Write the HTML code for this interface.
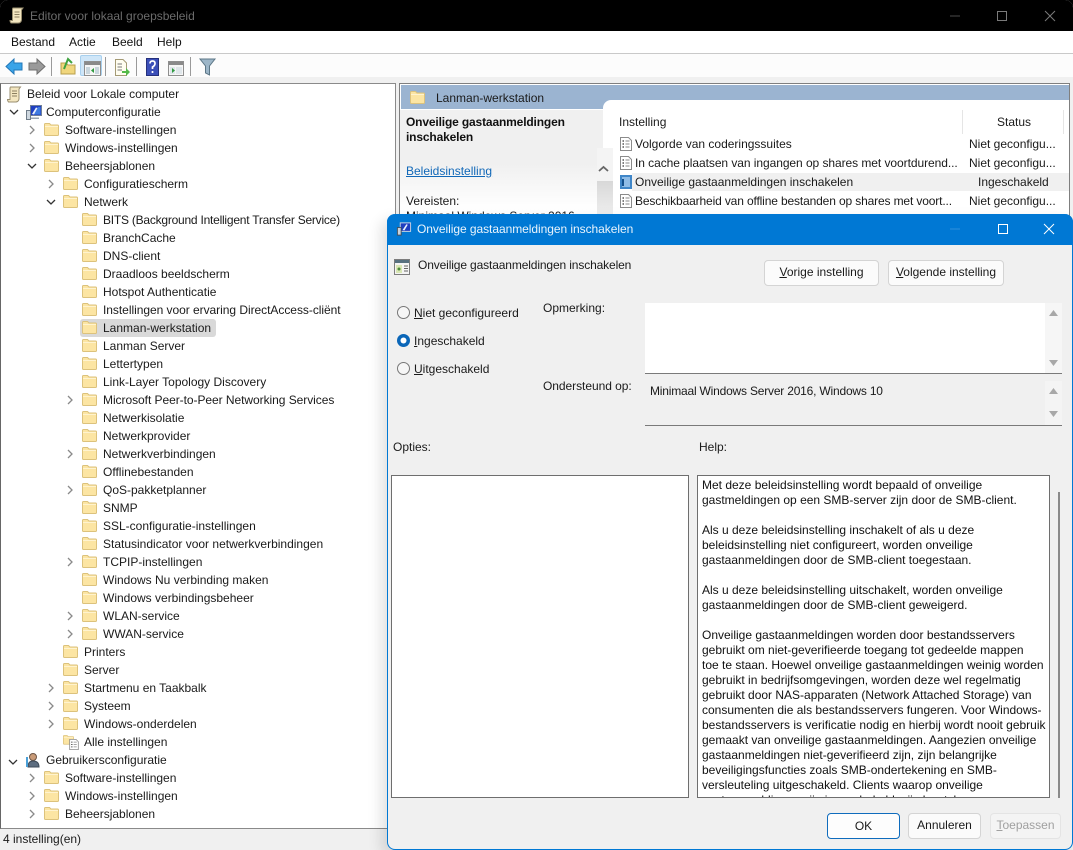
<!DOCTYPE html>
<html><head><meta charset="utf-8"><style>
html,body{margin:0;padding:0;background:#000;}
#p{position:relative;width:1073px;height:850px;overflow:hidden;background:#f0f0f0;font:12px/18px "Liberation Sans",sans-serif;color:#1a1a1a;border-radius:8px 8px 0 0}
#p div,#p span.a,#p svg.a{position:absolute}
.t{white-space:nowrap}
.h{left:702px;white-space:nowrap;height:15px;line-height:15px;color:#111}
u{text-decoration:underline}
.btn{background:#fbfbfb;border:1px solid #d4d4d4;border-radius:4px;text-align:center;box-sizing:border-box;line-height:23px;color:#1a1a1a}
</style></head><body><div id="p">
<svg width="0" height="0" style="position:absolute"><defs>
<symbol id="f" viewBox="0 0 15 14"><path d="M.5 2.500Q.5 1.500 1.500 1.500H5.500L7 3H13.500Q14.500 3 14.500 4V12.500Q14.500 13.500 13.500 13.500H1.500Q.5 13.500 .5 12.500Z" fill="#fce5a3" stroke="#dcc27c"/><path d="M1 4.500H14" stroke="#fff3cf" stroke-width="1"/></symbol>
<symbol id="l" viewBox="0 0 12 14"><path d="M.5.5H8.500L11.500 3.500V13.500H.5Z" fill="#fff" stroke="#8b8b8b"/><path d="M2.500 4H4M2.500 7H4M2.500 10H4" stroke="#333" stroke-width="1.200"/><path d="M5.500 4H9.500M5.500 7H9.500M5.500 10H9.500" stroke="#888"/></symbol>
</defs></svg>

<!-- title bar -->
<div style="left:0;top:0;width:1073px;height:31px;background:#000"></div>
<svg class="a" style="left:9px;top:7px" width="16" height="17" viewBox="0 0 16 17"><path d="M4 1H14L12.500 3V13Q12 16 9 16H2Q1 15 1 13.500H3.500V3Q3.500 1 4 1Z" fill="#f3e6c0" stroke="#9a8f70"/><path d="M5.500 5H10.500M5.500 7.500H10.500M5.500 10H10.500" stroke="#8b7f60"/></svg>
<div class="t" style="left:30px;top:7px;color:#6b6b6b">Editor voor lokaal groepsbeleid</div>
<svg class="a" style="left:950px;top:10px" width="110" height="12" viewBox="0 0 110 12"><path d="M0 6H10" stroke="#4a4a4a"/><path d="M47.500 1.500H56.500V10.500H47.500Z" fill="none" stroke="#7a7a7a"/><path d="M95 1L105 11M105 1L95 11" stroke="#7a7a7a"/></svg>

<!-- menu -->
<div style="left:0;top:31px;width:1073px;height:22px;background:#fff;border-bottom:1px solid #c9c9c9"></div>
<div class="t" style="left:11px;top:33px;color:#111">Bestand</div>
<div class="t" style="left:69px;top:33px;color:#111">Actie</div>
<div class="t" style="left:112px;top:33px;color:#111">Beeld</div>
<div class="t" style="left:157px;top:33px;color:#111">Help</div>

<!-- toolbar -->
<div style="left:0;top:54px;width:1073px;height:23px;background:#fcfcfc"></div>
<div style="left:80px;top:55px;width:22px;height:21px;background:#cfe6f8;border:1px solid #a8d0ee;border-radius:2px;box-sizing:border-box"></div>
<svg class="a" style="left:0;top:54px" width="225" height="26" viewBox="0 0 225 26">
<path d="M6 12.500L14 5V9H22V16H14V20Z" fill="#3aa4e8" stroke="#2277b8"/>
<path d="M45 12.500L37 5V9H29V16H37V20Z" fill="#9a9a9a" stroke="#6f6f6f"/>
<path d="M51.500 3V22M105.500 3V22M136.500 3V22M190.500 3V22" stroke="#9a9a9a"/>
<path d="M61 9H66L68 11H75V20H61Z" fill="#f0d67d" stroke="#b99f4d"/><path d="M64 15L68 5L72 9" fill="none" stroke="#3fa33f" stroke-width="2"/>
<path d="M84.500 7.500H100.500V21.500H84.500Z" fill="#f6f6f6" stroke="#8f8f8f"/><path d="M85 8H100V11H85Z" fill="#8a8a8a"/><path d="M86 13H90V20H86ZM95 13H99V20H95Z" fill="#c9d6dd"/><path d="M94 14V19L91 16.500Z" fill="#2f9a3f"/>
<path d="M115.500 5.500H123L126.500 9V21.500H115.500Z" fill="#fffdf0" stroke="#a49a75"/><path d="M117.500 10H122M117.500 13H122M117.500 16H122" stroke="#777"/><path d="M122 17H126V14L130 18L126 22V19H122Z" fill="#54b948"/>
<path d="M146.500 4.500H158.500V21.500H146.500Z" fill="#3b4fb8" stroke="#25307c"/><path d="M150 9.500Q150 7 152.500 7Q155 7 155 9.500Q155 11.500 152.500 13V15M152.500 17V19" fill="none" stroke="#fff" stroke-width="1.700"/>
<path d="M168.500 7.500H183.500V21.500H168.500Z" fill="#f6f6f6" stroke="#8f8f8f"/><path d="M169 8H183V11H169Z" fill="#8a8a8a"/><path d="M176 13H182V20H176ZM170 13H175V20H170Z" fill="#dfe6ea"/><path d="M172 14V19L175 16.500Z" fill="#2f9a3f"/>
<path d="M200 5H215L209.500 12V21L205.500 19V12Z" fill="#9db6c8" stroke="#5c7686"/>
</svg>

<!-- tree panel -->
<div style="left:0;top:83px;width:396px;height:746px;background:#fff;border:1px solid #8a8a8a;border-left:1px solid #666;box-sizing:border-box"></div>

<svg class="a" style="left:6px;top:86px" width="17" height="17" viewBox="0 0 16 17"><path d="M4 1H14L12.500 3V13Q12 16 9 16H2Q1 15 1 13.500H3.500V3Q3.500 1 4 1Z" fill="#f3e6c0" stroke="#9a8f70"/><path d="M5.500 5H10.500M5.500 7.500H10.500M5.500 10H10.500" stroke="#8b7f60"/></svg>
<div class="t" style="left:27px;top:85px">Beleid voor Lokale computer</div>

<svg class="a" style="left:9px;top:108px" width="10" height="8" viewBox="0 0 10 8"><path d="M1 2L5 6L9 2" fill="none" stroke="#333" stroke-width="1.300"/></svg>
<svg class="a" style="left:25px;top:105px" width="17" height="15" viewBox="0 0 17 15"><path d="M5.500.5H16.500V10.500H5.500Z" fill="#1f3fc0" stroke="#6f7f99"/><path d="M9 9.500L13 2H15.500V9.500Z" fill="#3f7be0"/><path d="M7 9L11 2.500L12.500 3L9 9.500Z" fill="#eaf2ff"/><path d="M1.500 5.500H5.500V14.500H1.500Z" fill="#cfd8e0" stroke="#6f7c88"/><path d="M6 12.500H14V14H6Z" fill="#9aa6b2"/></svg>
<div class="t" style="left:46px;top:103px">Computerconfiguratie</div>

<div style="left:80px;top:319px;width:136px;height:18px;background:#d9d9d9;border-radius:3px"></div>

<!-- tree rows: chevrons -->
<svg class="a" style="left:0;top:0" width="396" height="830">
<g fill="none" stroke="#8a8a8a" stroke-width="1.300">
<path d="M30 126l4 4l-4 4M30 144l4 4l-4 4M49 180l4 4l-4 4M68 396l4 4l-4 4M68 450l4 4l-4 4M68 486l4 4l-4 4M68 558l4 4l-4 4M68 612l4 4l-4 4M68 630l4 4l-4 4M49 684l4 4l-4 4M49 702l4 4l-4 4M49 720l4 4l-4 4M30 774l4 4l-4 4M30 792l4 4l-4 4M30 810l4 4l-4 4"/>
</g>
<g fill="none" stroke="#333" stroke-width="1.300">
<path d="M28 164l4 4l4-4M47 200l4 4l4-4"/>
</g>
<!-- folders -->
<g>
<use href="#f" x="44" y="122" width="15" height="14"/><use href="#f" x="44" y="140" width="15" height="14"/><use href="#f" x="44" y="158" width="15" height="14"/>
<use href="#f" x="63" y="176" width="15" height="14"/><use href="#f" x="63" y="194" width="15" height="14"/>
<use href="#f" x="82" y="212" width="15" height="14"/><use href="#f" x="82" y="230" width="15" height="14"/><use href="#f" x="82" y="248" width="15" height="14"/><use href="#f" x="82" y="266" width="15" height="14"/><use href="#f" x="82" y="284" width="15" height="14"/><use href="#f" x="82" y="302" width="15" height="14"/><use href="#f" x="82" y="320" width="15" height="14"/><use href="#f" x="82" y="338" width="15" height="14"/><use href="#f" x="82" y="356" width="15" height="14"/><use href="#f" x="82" y="374" width="15" height="14"/><use href="#f" x="82" y="392" width="15" height="14"/><use href="#f" x="82" y="410" width="15" height="14"/><use href="#f" x="82" y="428" width="15" height="14"/><use href="#f" x="82" y="446" width="15" height="14"/><use href="#f" x="82" y="464" width="15" height="14"/><use href="#f" x="82" y="482" width="15" height="14"/><use href="#f" x="82" y="500" width="15" height="14"/><use href="#f" x="82" y="518" width="15" height="14"/><use href="#f" x="82" y="536" width="15" height="14"/><use href="#f" x="82" y="554" width="15" height="14"/><use href="#f" x="82" y="572" width="15" height="14"/><use href="#f" x="82" y="590" width="15" height="14"/><use href="#f" x="82" y="608" width="15" height="14"/><use href="#f" x="82" y="626" width="15" height="14"/>
<use href="#f" x="63" y="644" width="15" height="14"/><use href="#f" x="63" y="662" width="15" height="14"/><use href="#f" x="63" y="680" width="15" height="14"/><use href="#f" x="63" y="698" width="15" height="14"/><use href="#f" x="63" y="716" width="15" height="14"/>
<use href="#f" x="44" y="770" width="15" height="14"/><use href="#f" x="44" y="788" width="15" height="14"/><use href="#f" x="44" y="806" width="15" height="14"/>
</g>
<!-- alle instellingen -->
<use href="#f" x="63" y="734" width="11" height="11"/><use href="#l" x="69" y="739" width="10" height="11"/>
<!-- user -->
<path d="M9 776l4 4l4-4" transform="translate(0 -16)" fill="none" stroke="#333" stroke-width="1.300"/>
<circle cx="33" cy="757" r="3.500" fill="#c99b78" stroke="#6d5546"/><path d="M28 767Q28 761 33 761Q39 761 39 767Z" fill="#5d6d80" stroke="#3d4a58"/><path d="M27 757V767" stroke="#4aa0d8" stroke-width="2"/>
</svg>

<div class="t" style="left:65px;top:121px">Software-instellingen</div>
<div class="t" style="left:65px;top:139px">Windows-instellingen</div>
<div class="t" style="left:65px;top:157px">Beheersjablonen</div>
<div class="t" style="left:84px;top:175px">Configuratiescherm</div>
<div class="t" style="left:84px;top:193px">Netwerk</div>
<div class="t" style="left:103px;top:211px;letter-spacing:-.23px">BITS (Background Intelligent Transfer Service)</div>
<div class="t" style="left:103px;top:229px">BranchCache</div>
<div class="t" style="left:103px;top:247px">DNS-client</div>
<div class="t" style="left:103px;top:265px">Draadloos beeldscherm</div>
<div class="t" style="left:103px;top:283px">Hotspot Authenticatie</div>
<div class="t" style="left:103px;top:301px;letter-spacing:-.04px">Instellingen voor ervaring DirectAccess-cliënt</div>
<div class="t" style="left:103px;top:319px">Lanman-werkstation</div>
<div class="t" style="left:103px;top:337px">Lanman Server</div>
<div class="t" style="left:103px;top:355px">Lettertypen</div>
<div class="t" style="left:103px;top:373px">Link-Layer Topology Discovery</div>
<div class="t" style="left:103px;top:391px;letter-spacing:-.05px">Microsoft Peer-to-Peer Networking Services</div>
<div class="t" style="left:103px;top:409px">Netwerkisolatie</div>
<div class="t" style="left:103px;top:427px">Netwerkprovider</div>
<div class="t" style="left:103px;top:445px">Netwerkverbindingen</div>
<div class="t" style="left:103px;top:463px">Offlinebestanden</div>
<div class="t" style="left:103px;top:481px">QoS-pakketplanner</div>
<div class="t" style="left:103px;top:499px">SNMP</div>
<div class="t" style="left:103px;top:517px">SSL-configuratie-instellingen</div>
<div class="t" style="left:103px;top:535px">Statusindicator voor netwerkverbindingen</div>
<div class="t" style="left:103px;top:553px">TCPIP-instellingen</div>
<div class="t" style="left:103px;top:571px">Windows Nu verbinding maken</div>
<div class="t" style="left:103px;top:589px">Windows verbindingsbeheer</div>
<div class="t" style="left:103px;top:607px">WLAN-service</div>
<div class="t" style="left:103px;top:625px">WWAN-service</div>
<div class="t" style="left:84px;top:643px">Printers</div>
<div class="t" style="left:84px;top:661px">Server</div>
<div class="t" style="left:84px;top:679px">Startmenu en Taakbalk</div>
<div class="t" style="left:84px;top:697px">Systeem</div>
<div class="t" style="left:84px;top:715px">Windows-onderdelen</div>
<div class="t" style="left:84px;top:733px">Alle instellingen</div>
<div class="t" style="left:46px;top:751px">Gebruikersconfiguratie</div>
<div class="t" style="left:65px;top:769px">Software-instellingen</div>
<div class="t" style="left:65px;top:787px">Windows-instellingen</div>
<div class="t" style="left:65px;top:805px">Beheersjablonen</div>

<!-- status bar -->
<div style="left:0;top:829px;width:388px;height:21px;background:#f0f0f0"></div>
<div class="t" style="left:3px;top:830px">4 instelling(en)</div>

<!-- right panel -->
<div style="left:399px;top:83px;width:671px;height:135px;background:#fff;border:1px solid #7f7f7f;box-sizing:border-box"></div>
<div style="left:401px;top:85px;width:668px;height:24px;background:#9bb4d1"></div>
<div style="left:400px;top:110px;width:203px;height:108px;background:linear-gradient(#f0f0f0,#f0f0f0 50%,#fff 92%)"></div>
<div style="left:603px;top:100px;width:466px;height:118px;background:#fff;border-radius:8px 0 0 0"></div>
<svg class="a" style="left:410px;top:90px" width="15" height="14"><use href="#f"/></svg>
<div class="t" style="left:436px;top:89px;color:#1a1a1a">Lanman-werkstation</div>
<div class="t" style="left:406px;top:115px;font-weight:bold;color:#111;line-height:15px;letter-spacing:-.15px">Onveilige gastaanmeldingen<br>inschakelen</div>
<div class="t" style="left:406px;top:162px;color:#1168b8"><u>Beleidsinstelling</u></div>
<div class="t" style="left:406px;top:192px">Vereisten:</div>
<div class="t" style="left:406px;top:207px">Minimaal Windows Server 2016,</div>
<div style="left:597px;top:148px;width:16px;height:70px;background:linear-gradient(#f4f4f4,#f4f4f4 33px,#d8d8d8 33px,#f0f0f0)"></div>
<svg class="a" style="left:598px;top:165px" width="11" height="8"><path d="M1 6L5.500 2L10 6" fill="none" stroke="#666" stroke-width="1.800"/></svg>

<div class="t" style="left:619px;top:113px">Instelling</div>
<div style="left:962px;top:110px;width:1px;height:24px;background:#e5e5e5"></div>
<div style="left:1063px;top:110px;width:1px;height:24px;background:#e5e5e5"></div>
<div class="t" style="left:997px;top:113px">Status</div>
<div style="left:632px;top:173px;width:437px;height:18px;background:#f0f0f0"></div>
<svg class="a" style="left:620px;top:137px" width="12" height="14"><use href="#l"/></svg>
<svg class="a" style="left:620px;top:156px" width="12" height="14"><use href="#l"/></svg>
<svg class="a" style="left:620px;top:175px" width="12" height="14" viewBox="0 0 12 14"><path d="M0 0H12V14H0Z" fill="#3f86c8"/><path d="M2 2H10V12H2Z" fill="#8fbce6"/><path d="M3 4V11" stroke="#14508c" stroke-width="2"/></svg>
<svg class="a" style="left:620px;top:194px" width="12" height="14"><use href="#l"/></svg>
<div class="t" style="left:635px;top:135px">Volgorde van coderingssuites</div>
<div class="t" style="left:635px;top:154px;letter-spacing:-.06px">In cache plaatsen van ingangen op shares met voortdurend...</div>
<div class="t" style="left:635px;top:173px">Onveilige gastaanmeldingen inschakelen</div>
<div class="t" style="left:635px;top:192px;letter-spacing:-.14px">Beschikbaarheid van offline bestanden op shares met voort...</div>
<div class="t" style="left:969px;top:135px">Niet geconfigu...</div>
<div class="t" style="left:969px;top:154px">Niet geconfigu...</div>
<div class="t" style="left:978px;top:173px">Ingeschakeld</div>
<div class="t" style="left:969px;top:192px">Niet geconfigu...</div>
<div style="left:1070px;top:83px;width:3px;height:135px;background:#f0f0f0"></div>

<!-- dialog -->
<div style="left:387px;top:214px;width:686px;height:636px;background:#f0f0f0;border:1px solid #0078d4;border-top:0;border-radius:8px;box-sizing:border-box;box-shadow:-6px 6px 14px rgba(0,0,0,.12)"></div>
<div style="left:387px;top:214px;width:686px;height:31px;background:#0078d4;border-radius:8px 8px 0 0"></div>
<svg class="a" style="left:396px;top:221px" width="16" height="16" viewBox="0 0 17 16"><path d="M4.500 1.500H15.500V10.500H4.500Z" fill="#1f3fc0" stroke="#c5d2e2"/><path d="M7 9L11 3L12.500 3.500L9 9.500Z" fill="#eaf2ff"/><path d="M1.500 6.500H5.500V14.500H1.500Z" fill="#c9d2dc" stroke="#42505c"/></svg>
<div class="t" style="left:417px;top:220px;color:#eaf4fc;letter-spacing:-.05px">Onveilige gastaanmeldingen inschakelen</div>
<svg class="a" style="left:950px;top:223px" width="110" height="12" viewBox="0 0 110 12"><path d="M0 6H10" stroke="#2f8fdc"/><path d="M48.500 1.500H57.500V10.500H48.500Z" fill="none" stroke="#fff"/><path d="M94 1L104 11M104 1L94 11" stroke="#fff"/></svg>

<svg class="a" style="left:394px;top:258px" width="16" height="17" viewBox="0 0 16 17"><path d="M.5 1.500H15.500V16.500H.5Z" fill="#f4f4f4" stroke="#7c7c7c"/><path d="M1 2H15V5H1Z" fill="#57707f"/><path d="M2 7H8V15H2Z" fill="#d9e6b4"/><path d="M10 8H14M10 10.500H14M10 13H14" stroke="#666"/><circle cx="5" cy="11" r="1.500" fill="#4a8a3a"/></svg>
<div class="t" style="left:418px;top:256px;letter-spacing:-.13px">Onveilige gastaanmeldingen inschakelen</div>
<div class="btn" style="left:764px;top:260px;width:115px;height:26px"><u>V</u>orige instelling</div>
<div class="btn" style="left:888px;top:260px;width:116px;height:26px"><u>V</u>olgende instelling</div>

<svg class="a" style="left:396px;top:305px" width="15" height="72" viewBox="0 0 15 72">
<circle cx="7.500" cy="7.500" r="6" fill="#f6f6f6" stroke="#777"/>
<circle cx="7.500" cy="35.500" r="6.500" fill="#0a66b8"/><circle cx="7.500" cy="35.500" r="3" fill="#fff"/>
<circle cx="7.500" cy="63.500" r="6" fill="#f6f6f6" stroke="#777"/>
</svg>
<div class="t" style="left:414px;top:304px"><u>N</u>iet geconfigureerd</div>
<div class="t" style="left:414px;top:332px"><u>I</u>ngeschakeld</div>
<div class="t" style="left:414px;top:360px"><u>U</u>itgeschakeld</div>
<div class="t" style="left:543px;top:299px">Opmerking:</div>
<div class="t" style="left:543px;top:377px;letter-spacing:-.05px">Ondersteund op:</div>

<div style="left:645px;top:303px;width:417px;height:71px;background:#fff;border-bottom:1px solid #7a7a7a;box-sizing:border-box"></div>
<div style="left:1045px;top:303px;width:17px;height:70px;background:#f6f6f6"></div>
<svg class="a" style="left:1048px;top:308px" width="11" height="62"><path d="M1 8L5.500 2L10 8Z" fill="#a8a8a8"/><path d="M1 52L5.500 58L10 52Z" fill="#a8a8a8"/></svg>
<div style="left:645px;top:381px;width:417px;height:45px;background:#f0f0f0;border-bottom:1px solid #7a7a7a;box-sizing:border-box"></div>
<div style="left:1045px;top:381px;width:17px;height:44px;background:#f4f4f4"></div>
<svg class="a" style="left:1048px;top:384px" width="11" height="40"><path d="M1 10L5.500 4L10 10Z" fill="#a8a8a8"/><path d="M1 27L5.500 33L10 27Z" fill="#a8a8a8"/></svg>
<div class="t" style="left:650px;top:382px;letter-spacing:-.2px">Minimaal Windows Server 2016, Windows 10</div>

<div class="t" style="left:393px;top:438px">Opties:</div>
<div class="t" style="left:699px;top:438px">Help:</div>

<div style="left:391px;top:475px;width:298px;height:323px;background:#fff;border:1px solid #6e6e6e;box-sizing:border-box"></div>
<div style="left:697px;top:475px;width:353px;height:323px;background:#fff;border:1px solid #6e6e6e;box-sizing:border-box"></div>
<div style="left:1058px;top:492px;width:2px;height:306px;background:#8a8a8a"></div>

<div style="left:698px;top:476px;width:351px;height:321px;overflow:hidden">
<div class="h" style="left:4px;top:2px">Met deze beleidsinstelling wordt bepaald of onveilige</div>
<div class="h" style="left:4px;top:17px">gastmeldingen op een SMB-server zijn door de SMB-client.</div>
<div class="h" style="left:4px;top:47px">Als u deze beleidsinstelling inschakelt of als u deze</div>
<div class="h" style="left:4px;top:62px">beleidsinstelling niet configureert, worden onveilige</div>
<div class="h" style="left:4px;top:77px">gastaanmeldingen door de SMB-client toegestaan.</div>
<div class="h" style="left:4px;top:107px">Als u deze beleidsinstelling uitschakelt, worden onveilige</div>
<div class="h" style="left:4px;top:122px">gastaanmeldingen door de SMB-client geweigerd.</div>
<div class="h" style="left:4px;top:152px">Onveilige gastaanmeldingen worden door bestandsservers</div>
<div class="h" style="left:4px;top:167px">gebruikt om niet-geverifieerde toegang tot gedeelde mappen</div>
<div class="h" style="left:4px;top:182px">toe te staan. Hoewel onveilige gastaanmeldingen weinig worden</div>
<div class="h" style="left:4px;top:197px">gebruikt in bedrijfsomgevingen, worden deze wel regelmatig</div>
<div class="h" style="left:4px;top:212px">gebruikt door NAS-apparaten (Network Attached Storage) van</div>
<div class="h" style="left:4px;top:227px">consumenten die als bestandsservers fungeren. Voor Windows-</div>
<div class="h" style="left:4px;top:242px">bestandsservers is verificatie nodig en hierbij wordt nooit gebruik</div>
<div class="h" style="left:4px;top:257px">gemaakt van onveilige gastaanmeldingen. Aangezien onveilige</div>
<div class="h" style="left:4px;top:272px">gastaanmeldingen niet-geverifieerd zijn, zijn belangrijke</div>
<div class="h" style="left:4px;top:287px">beveiligingsfuncties zoals SMB-ondertekening en SMB-</div>
<div class="h" style="left:4px;top:302px">versleuteling uitgeschakeld. Clients waarop onveilige</div>
<div class="h" style="left:4px;top:317px">gastaanmeldingen zijn ingeschakeld, zijn kwetsbaar voor</div>
</div>

<div class="btn" style="left:827px;top:813px;width:73px;height:26px;border:1px solid #0f6cbd;line-height:24px;background:#fdfdfd">OK</div>
<div class="btn" style="left:908px;top:813px;width:73px;height:26px">Annuleren</div>
<div class="btn" style="left:990px;top:813px;width:71px;height:26px;background:#f4f4f4;border-color:#e4e4e4;color:#a0a0a0"><u>T</u>oepassen</div>
</div></body></html>
